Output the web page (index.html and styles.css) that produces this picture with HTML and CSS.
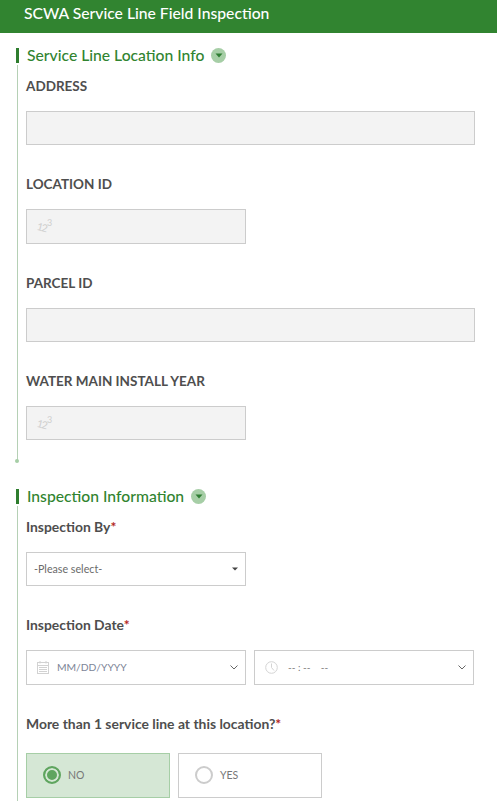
FILE: index.html
```html
<!DOCTYPE html>
<html lang="en">
<head>
<meta charset="utf-8">
<title>SCWA Service Line Field Inspection</title>
<link rel="stylesheet" href="styles.css">
</head>
<body>
<header class="app-header">SCWA Service Line Field Inspection</header>
<main class="form">
  <section class="group">
    <div class="group-head">
      <h2 class="group-title">Service Line Location Info</h2>
      <span class="toggle"><svg width="8" height="5" viewBox="0 0 8 5"><path d="M0.5 0.5h7L4 4.5z" fill="#2e7d32"/></svg></span>
    </div>
    <div class="group-body group-body-closed">
      <div class="field"><div class="label caps">ADDRESS</div><div class="input readonly"></div></div>
      <div class="field"><div class="label caps">LOCATION ID</div><div class="input readonly half"><span class="num-icon"><span class="num-12">12</span><span class="num-3">3</span></span></div></div>
      <div class="field"><div class="label caps">PARCEL ID</div><div class="input readonly"></div></div>
      <div class="field"><div class="label caps">WATER MAIN INSTALL YEAR</div><div class="input readonly half"><span class="num-icon"><span class="num-12">12</span><span class="num-3">3</span></span></div></div>
      <span class="end-dot"></span>
    </div>
  </section>
  <section class="group group-second">
    <div class="group-head">
      <h2 class="group-title">Inspection Information</h2>
      <span class="toggle"><svg width="8" height="5" viewBox="0 0 8 5"><path d="M0.5 0.5h7L4 4.5z" fill="#2e7d32"/></svg></span>
    </div>
    <div class="group-body">
      <div class="field"><div class="label">Inspection By<span class="req">*</span></div>
        <div class="input half select"><span class="select-text">-Please select-</span><svg width="6" height="4" viewBox="0 0 6 4"><path d="M0 0.5h6L3 3.5z" fill="#444"/></svg></div>
      </div>
      <div class="field"><div class="label">Inspection Date<span class="req">*</span></div>
        <div class="date-row">
          <div class="input half dt">
            <svg class="dt-icon" width="12" height="13" viewBox="0 0 12 13" fill="none" stroke="#d2d2d2"><rect x="0.5" y="1.5" width="11" height="11"/><path d="M0.500 4.500h11M3 0v2.500M9 0v2.500M2 6.500h8M2 8.500h8M2 10.500h8"/></svg>
            <span class="dt-text">MM/DD/YYYY</span>
            <svg class="chev" width="8" height="5" viewBox="0 0 8 5" fill="none" stroke="#666"><path d="M0.5 0.5L4 4L7.500 0.500"/></svg>
          </div>
          <div class="input half dt">
            <svg class="dt-icon" width="13" height="13" viewBox="0 0 13 13" fill="none" stroke="#d4d4d4"><circle cx="6.500" cy="6.500" r="5.800"/><path d="M6.500 2.500v4l2.500 3"/></svg>
            <span class="time-text">-- : --&nbsp;&nbsp;&nbsp;&nbsp;--</span>
            <svg class="chev" width="8" height="5" viewBox="0 0 8 5" fill="none" stroke="#666"><path d="M0.5 0.5L4 4L7.500 0.500"/></svg>
          </div>
        </div>
      </div>
      <div class="field"><div class="label">More than 1 service line at this location?<span class="req">*</span></div>
        <div class="radios">
          <div class="radio selected"><span class="dot"></span><span>NO</span></div>
          <div class="radio"><span class="dot"></span><span>YES</span></div>
        </div>
      </div>
    </div>
  </section>
</main>
</body>
</html>
```
FILE: styles.css
```css
* { box-sizing: border-box; }
html, body { margin: 0; height: 100%; overflow: hidden; }
body { background: #fff; font-family: Lato, "Open Sans", sans-serif; color: #4a4a4a; }
.app-header {
  height: 33px; background: #318430; color: #fff;
  font-size: 15.700px; font-weight: 500; line-height: 27px; padding-left: 24px;
}
.form { padding: 15px 22px 0 16px; }
.group-head {
  display: flex; align-items: center; height: 15px;
  border-left: 3px solid #2e7d2e; padding-left: 8px; gap: 7px;
}
.group-title { margin: 0 0 2px; font-size: 15.700px; font-weight: 500; color: #318430; line-height: 14px; }
.toggle {
  width: 15px; height: 15px; border-radius: 50%; background: #a6cea6;
  display: flex; align-items: center; justify-content: center;
}
.group-body {
  position: relative; margin: 2px 0 0 1px; border-left: 1px solid #b5d0b5;
  padding-left: 8px; display: flex; flex-direction: column;
}
.group-body-closed { height: 396px; }
.group-second { margin-top: 28px; }
.field { margin-bottom: 30px; width: 449px; }
.label {
  font-size: 13.900px; font-weight: 700; line-height: 18px; color: #4e4e4e;
  margin-top: 12px; margin-bottom: 16px;
}
.label.caps { font-size: 13.500px; }
.field + .field .label { margin-top: 0; }
.req { color: #b3261e; }
.input {
  height: 34.330px; border: 1px solid #ccc; background: #fff; display: flex; align-items: center;
  width: 449px;
}
.readonly { background: #f3f3f3; }
.half { width: 220px; }
.num-icon { color: #cfcfcf; margin-left: 10px; display: flex; align-items: flex-start; height: 14px; line-height: 12px; }
.num-12 { font-size: 10.500px; letter-spacing: -1.300px; margin-top: 2px; transform: rotate(14deg); }
.num-3 { font-size: 9px; margin: -2px 0 0 0.500px; }
.end-dot {
  position: absolute; left: -3px; bottom: -2px; width: 4px; height: 4px;
  border-radius: 50%; background: #a6cea6;
}
.select { justify-content: space-between; padding: 0 7px 0 7px; }
.select-text { font-size: 10.700px; color: #6a6a6a; margin-top: -2px; }
.date-row { display: flex; gap: 8px; width: 449px; }
.dt { padding: 0 7px 0 10px; }
.dt-icon { flex: none; }
.dt-text { font-size: 10.300px; color: #7d8597; margin: -1px 0 0 8px; flex: 1; }
.time-text { font-size: 10px; color: #777; margin-left: 10px; flex: 1; }
.chev { flex: none; }
.radios { display: flex; gap: 8px; padding-top: 4px; }
.radio {
  width: 144px; height: 45px; border: 1px solid #ccc; display: flex; align-items: center;
  padding-left: 16px; gap: 7px; font-size: 10.500px; color: #777;
}
.dot { width: 18px; height: 18px; border-radius: 50%; border: 2.500px solid #ccc; background: #fff; flex: none; }
.radio.selected { background: #d5e7d5; border-color: #a6cea6; }
.radio.selected .dot { border-color: #5fa55f; background: #5fa55f; box-shadow: inset 0 0 0 2px #d5e7d5; }
```
